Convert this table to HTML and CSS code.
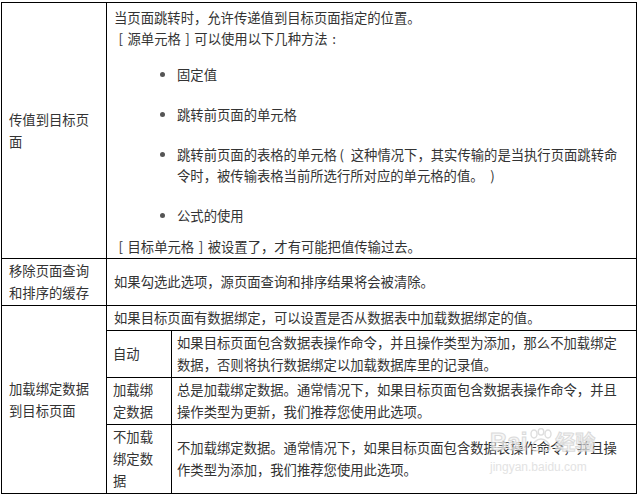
FILE: index.html
```html
<!DOCTYPE html>
<html lang="zh-CN">
<head>
<meta charset="utf-8">
<title>页面跳转</title>
<link rel="stylesheet" href="styles.css">
</head>
<body>
<div class="page">
<table class="grid">
  <colgroup><col class="c1"><col class="c2"><col class="c3"></colgroup>
  <tr>
    <td class="label">传值到目标页面</td>
    <td colspan="2" class="desc">
      <p>当页面跳转时，允许传递值到目标页面指定的位置。</p>
      <p><span class="fw">[</span>源单元格<span class="fw">]</span>可以使用以下几种方法<span class="fw">:</span></p>
      <ul>
        <li>固定值</li>
        <li>跳转前页面的单元格</li>
        <li>跳转前页面的表格的单元格&#8201;(&#8194;这种情况下，其实传输的是当执行页面跳转命令时，被传输表格当前所选行所对应的单元格的值。&#8194;)</li>
        <li>公式的使用</li>
      </ul>
      <p><span class="fw">[</span>目标单元格<span class="fw">]</span>被设置了，才有可能把值传输过去。</p>
    </td>
  </tr>
  <tr>
    <td class="label">移除页面查询和排序的缓存</td>
    <td colspan="2" class="text">如果勾选此选项，源页面查询和排序结果将会被清除。</td>
  </tr>
  <tr>
    <td class="label" rowspan="4">加载绑定数据到目标页面</td>
    <td colspan="2" class="text">如果目标页面有数据绑定，可以设置是否从数据表中加载数据绑定的值。</td>
  </tr>
  <tr>
    <td class="opt">自动</td>
    <td class="text wide">如果目标页面包含数据表操作命令，并且操作类型为添加，那么不加载绑定数据，否则将执行数据绑定以加载数据库里的记录值。</td>
  </tr>
  <tr>
    <td class="opt">加载绑定数据</td>
    <td class="text wide">总是加载绑定数据。通常情况下，如果目标页面包含数据表操作命令，并且操作类型为更新，我们推荐您使用此选项。</td>
  </tr>
  <tr>
    <td class="opt">不加载绑定数据</td>
    <td class="text wide">不加载绑定数据。通常情况下，如果目标页面包含数据表操作命令，并且操作类型为添加，我们推荐您使用此选项。</td>
  </tr>
</table>
<div class="watermark" aria-hidden="true">
  <div class="wm-top"><span class="wm-bai">Bai</span><svg class="wm-paw" width="26" height="24" viewBox="0 0 26 24"><g fill="none" stroke="#d6d6d6" stroke-width="1.4"><ellipse cx="6" cy="6" rx="3" ry="4"/><ellipse cx="13" cy="3.8" rx="2.8" ry="3.3"/><ellipse cx="20" cy="6" rx="3" ry="4"/><path d="M4 20c0-5 5-9 9-9s9 4 9 9c0 3-3 3-5 2.5s-6-.5-8 0S4 23 4 20z"/></g></svg><span class="wm-jy">经验</span></div>
  <div class="wm-url">jingyan.baidu.com</div>
</div>
</div>
</body>
</html>
```
FILE: styles.css
```css
html, body {
  margin: 0;
  padding: 0;
  background: #fff;
}
body {
  font-family: "Noto Sans CJK SC", "Microsoft YaHei", sans-serif;
  font-size: 13.33px;
  color: #333;
}
.page {
  position: relative;
  padding: 2px 0 0 1px;
}
.grid {
  border-collapse: collapse;
  table-layout: fixed;
  width: 635px;
}
.c1 { width: 105px; }
.c2 { width: 65px; }
.c3 { width: 465px; }
.grid td {
  border: 1px solid #000;
  padding: 1px 7px 1px 7px;
  line-height: 22px;
  vertical-align: middle;
}
.grid td.opt {
  padding: 1px 8px 1px 6px;
}
.grid td.wide {
  padding: 1px 10px 1px 5px;
}
.grid td.desc {
  vertical-align: top;
  line-height: 21px;
  padding: 4px 7px 1px 7px;
}
.fw {
  margin: 0 4.5px;
}
.desc p {
  margin: 0;
}
.desc ul {
  margin: 15px 5px 10px 0;
  padding-left: 63px;
}
.desc li + li {
  margin-top: 19px;
}
.desc li::marker {
  color: #555;
}
.watermark {
  position: absolute;
  left: 490px;
  top: 428px;
  width: 118px;
  color: #e2e2e2;
  pointer-events: none;
  opacity: 0.8;
}
.wm-top {
  display: flex;
  align-items: flex-end;
  gap: 1px;
}
.wm-bai {
  font-family: "Liberation Sans", sans-serif;
  font-weight: bold;
  font-size: 24px;
  line-height: 26px;
  color: #f4f4f4;
  -webkit-text-stroke: 1px #d2d2d2;
}
.wm-paw {
  margin-bottom: 3px;
}
.wm-jy {
  font-size: 20px;
  line-height: 26px;
  font-weight: bold;
  color: #f4f4f4;
  -webkit-text-stroke: 1px #d2d2d2;
}
.wm-url {
  font-family: "Liberation Sans", sans-serif;
  font-size: 12px;
  line-height: 16px;
  margin-top: 4px;
  color: #dcdcdc;
}
```
